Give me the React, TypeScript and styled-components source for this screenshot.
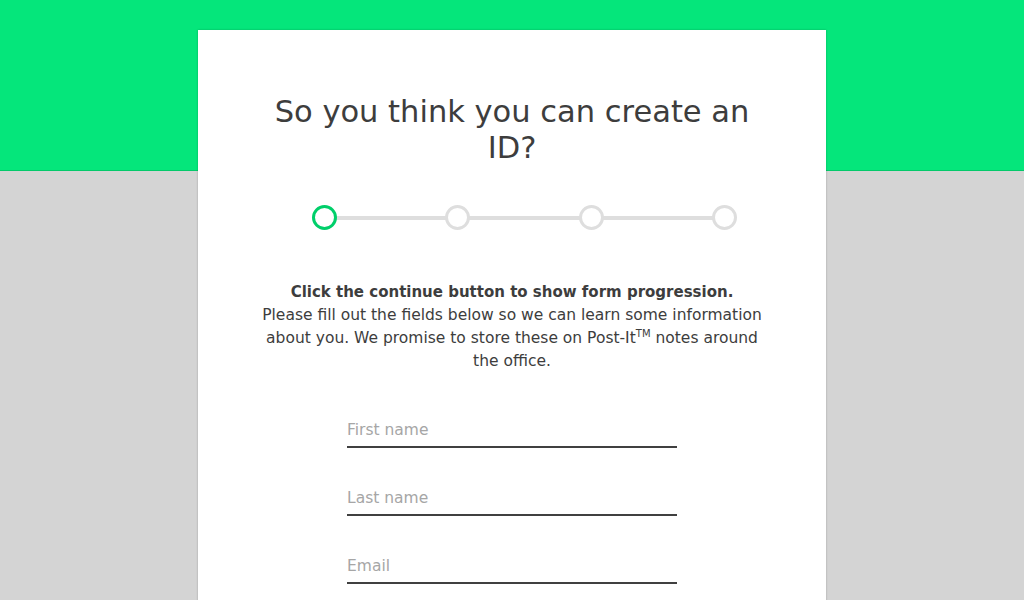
import React from "react";
import styled, { createGlobalStyle } from "styled-components";

const Global = createGlobalStyle`
  html, body { margin: 0; padding: 0; }
  body {
    background: #d4d4d4;
    font-family: "DejaVu Sans", Verdana, sans-serif;
    color: #404040;
    overflow: hidden;
  }
`;

const Page = styled.div`
  min-height: 600px;
  display: flex;
  flex-direction: column;
`;

const Header = styled.div`
  height: 170px;
  background: #05e67b;
  border-bottom: 1px solid #03c96a;
`;

const Stage = styled.div`
  margin-top: -141px;
  display: flex;
  justify-content: center;
`;

const Card = styled.div`
  width: 628px;
  min-height: 600px;
  background: #fff;
  box-shadow: 0 0 2px rgba(0, 0, 0, 0.25);
  padding: 64px 64px 0;
  box-sizing: border-box;
  display: flex;
  flex-direction: column;
  align-items: center;
`;

const Title = styled.h1`
  margin: 0;
  font-weight: normal;
  font-size: 30.5px;
  line-height: 36px;
  text-align: center;
  color: #3d3d3d;
  width: 500px;
`;

const Steps = styled.div`
  margin-top: 39px;
  width: 426px;
  margin-left: 25px;
  display: flex;
  justify-content: space-between;
  align-items: center;
  position: relative;
`;

const Track = styled.div`
  position: absolute;
  left: 12px;
  right: 12px;
  top: 50%;
  height: 4px;
  margin-top: -2px;
  background: #dedede;
`;

const Dot = styled.div<{ $active?: boolean }>`
  position: relative;
  width: 19px;
  height: 19px;
  border-radius: 50%;
  background: #fff;
  border: 3px solid ${(p) => (p.$active ? "#00cf6a" : "#dedede")};
`;

const Intro = styled.p`
  margin: 51px 0 0;
  width: 510px;
  font-size: 15.5px;
  line-height: 23px;
  text-align: center;
  color: #3d3d3d;
`;

const Strong = styled.strong`
  font-weight: bold;
  font-size: 15px;
`;

const Sup = styled.sup`
  font-size: 10px;
  line-height: 0;
  vertical-align: 6px;
`;

const Form = styled.form`
  margin-top: 45px;
  width: 330px;
  display: flex;
  flex-direction: column;
  gap: 38px;
`;

const Input = styled.input`
  width: 100%;
  box-sizing: border-box;
  border: none;
  border-bottom: 2px solid #404040;
  padding: 0 0 4px;
  font-family: inherit;
  font-size: 15.5px;
  line-height: 24px;
  color: #404040;
  background: transparent;
  outline: none;
  &::placeholder { color: #a6a6a6; }
`;

export default function App() {
  return (
    <Page>
      <Global />
      <Header />
      <Stage>
        <Card>
          <Title>So you think you can create an ID?</Title>
          <Steps>
            <Track />
            <Dot $active />
            <Dot />
            <Dot />
            <Dot />
          </Steps>
          <Intro>
            <Strong>Click the continue button to show form progression.</Strong>
            <br />
            Please fill out the fields below so we can learn some information
            about you. We promise to store these on Post-It<Sup>TM</Sup> notes around
            the office.
          </Intro>
          <Form>
            <Input placeholder="First name" />
            <Input placeholder="Last name" />
            <Input placeholder="Email" />
          </Form>
        </Card>
      </Stage>
    </Page>
  );
}
